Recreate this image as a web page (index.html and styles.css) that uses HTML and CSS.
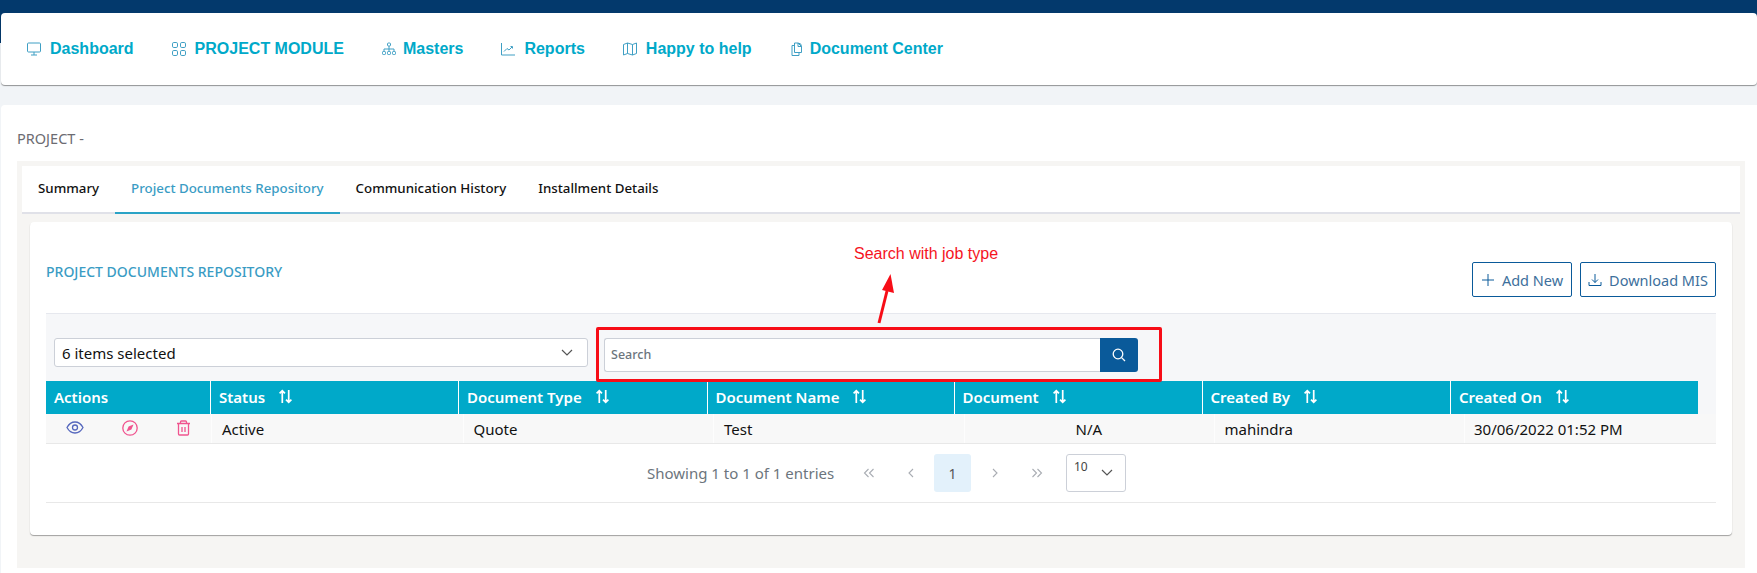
FILE: index.html
```html
<!DOCTYPE html>
<html lang="en">
<head>
    <meta charset="UTF-8">
    <meta name="viewport" content="width=device-width, initial-scale=1.0">
    <title>Project Documents Repository</title>
    <link rel="stylesheet" href="styles.css">
</head>
<body>
    <div class="top-bar"></div>
    <div class="nav-wrap">
        <nav class="main-nav">
            <a class="nav-item">
                <svg class="nav-icon" viewBox="0 0 14 14"><rect x="0.5" y="1" width="13" height="9" rx="1"/><path d="M7 10v3M4 13h6"/></svg>
                Dashboard
            </a>
            <a class="nav-item">
                <svg class="nav-icon" viewBox="0 0 14 14"><rect x="0.5" y="0.5" width="5" height="5" rx="1.3"/><rect x="8.5" y="0.5" width="5" height="5" rx="1.3"/><rect x="0.5" y="8.5" width="5" height="5" rx="1.3"/><rect x="8.5" y="8.5" width="5" height="5" rx="1.3"/></svg>
                PROJECT MODULE
            </a>
            <a class="nav-item item-masters">
                <svg class="nav-icon" viewBox="0 0 14 14"><rect x="5.5" y="1" width="3" height="3" rx="1"/><rect x="0.5" y="9.5" width="3" height="3" rx="0.8"/><rect x="5.5" y="9.5" width="3" height="3" rx="0.8"/><rect x="10.5" y="9.5" width="3" height="3" rx="0.8"/><path d="M7 4v5.5M2 9.5V7h10v2.5"/></svg>
                Masters
            </a>
            <a class="nav-item">
                <svg class="nav-icon" viewBox="0 0 14 14"><path d="M0.5 1v12h13.500"/><path d="M3 9.500l3-3 2 1.500 3-3M9.500 4.500H11.500V6.500"/></svg>
                Reports
            </a>
            <a class="nav-item">
                <svg class="nav-icon" viewBox="0 0 14 14"><path d="M0.5 2.500l4-1.500 5 1.500 4-1.500v10.500l-4 1.500-5-1.500-4 1.500zM4.500 1v10.500M9.500 2.500V13"/></svg>
                Happy to help
            </a>
            <a class="nav-item item-docs">
                <svg class="nav-icon" viewBox="0 0 14 14"><path d="M4.500 1h3.500l3.500 3.500v6h-7z"/><path d="M8 1a3.500 3.500 0 0 1 3.500 3.500H8z"/><path d="M4.500 3.500H2v10h7v-3"/></svg>
                Document Center
            </a>
        </nav>
    </div>

    <main class="page">
        <h1 class="page-title">PROJECT -</h1>
        <div class="project-area">
            <div class="tabs">
                <a class="tab">Summary</a>
                <a class="tab active">Project Documents Repository</a>
                <a class="tab">Communication History</a>
                <a class="tab">Installment Details</a>
            </div>

            <section class="card">
                <div class="card-head">
                    <h2 class="card-title">PROJECT DOCUMENTS REPOSITORY</h2>
                    <div class="card-actions">
                        <button class="btn-outline btn-add">
                            <svg class="btn-icon" viewBox="0 0 14 14"><path d="M7 1v12M1 7h12"/></svg>
                            Add New
                        </button>
                        <button class="btn-outline btn-mis">
                            <svg class="btn-icon" viewBox="0 0 14 14"><path d="M7 1v8.500M4 6.500l3 3 3-3M1 9v3.500h12V9"/></svg>
                            Download MIS
                        </button>
                    </div>
                </div>

                <div class="filter-band">
                    <div class="select-box">
                        <span>6 items selected</span>
                        <svg class="chevron" viewBox="0 0 12 7"><path d="M1 1l5 5 5-5"/></svg>
                    </div>
                    <div class="search-group">
                        <input class="search-input" type="text" placeholder="Search">
                        <button class="search-btn">
                            <svg viewBox="0 0 14 14"><circle cx="6" cy="6" r="4.800"/><path d="M9.600 9.600l3.400 3.400"/></svg>
                        </button>
                    </div>
                    <div class="note-box"></div>
                    <div class="note-text">Search with job type</div>
                    <svg class="note-arrow" viewBox="0 0 20 52"><path d="M3 50L11 18" class="note-shaft"/><path d="M14.500 1L18 20 6 17z" class="note-head"/></svg>
                </div>

                <div class="table-wrap">
                    <div class="table-head">
                        <div class="th">Actions</div>
                        <div class="th">Status <svg class="sort" viewBox="0 0 14 14"><path d="M4 13V1.500M1.500 4L4 1.500 6.500 4M10 1v11.500M7.500 10l2.500 2.500 2.500-2.500"/></svg></div>
                        <div class="th">Document Type <svg class="sort" viewBox="0 0 14 14"><path d="M4 13V1.500M1.500 4L4 1.500 6.500 4M10 1v11.500M7.500 10l2.500 2.500 2.500-2.500"/></svg></div>
                        <div class="th">Document Name <svg class="sort" viewBox="0 0 14 14"><path d="M4 13V1.500M1.500 4L4 1.500 6.500 4M10 1v11.500M7.500 10l2.500 2.500 2.500-2.500"/></svg></div>
                        <div class="th">Document <svg class="sort" viewBox="0 0 14 14"><path d="M4 13V1.500M1.500 4L4 1.500 6.500 4M10 1v11.500M7.500 10l2.500 2.500 2.500-2.500"/></svg></div>
                        <div class="th">Created By <svg class="sort" viewBox="0 0 14 14"><path d="M4 13V1.500M1.500 4L4 1.500 6.500 4M10 1v11.500M7.500 10l2.500 2.500 2.500-2.500"/></svg></div>
                        <div class="th">Created On <svg class="sort" viewBox="0 0 14 14"><path d="M4 13V1.500M1.500 4L4 1.500 6.500 4M10 1v11.500M7.500 10l2.500 2.500 2.500-2.500"/></svg></div>
                    </div>
                    <div class="table-row">
                        <div class="td row-actions">
                            <svg class="icon-eye" viewBox="0 0 18 13"><path d="M1 6.500C3 2.800 5.800 1 9 1s6 1.800 8 5.500c-2 3.700-4.800 5.500-8 5.500s-6-1.800-8-5.500z"/><circle cx="9" cy="6.500" r="2.500"/></svg>
                            <svg class="icon-compass" viewBox="0 0 16 16"><circle cx="8" cy="8" r="7.200"/><path d="M11.500 4.500L9.400 9.400 4.500 11.500 6.600 6.600z" class="fill"/></svg>
                            <svg class="icon-trash" viewBox="0 0 15 16"><path d="M1 3.500h13M2.500 3.500V14a1 1 0 0 0 1 1h8a1 1 0 0 0 1-1V3.500M4.500 3.500V2a1 1 0 0 1 1-1h4a1 1 0 0 1 1 1v1.500M6 7v5M9 7v5"/></svg>
                        </div>
                        <div class="td">Active</div>
                        <div class="td">Quote</div>
                        <div class="td">Test</div>
                        <div class="td td-center">N/A</div>
                        <div class="td">mahindra</div>
                        <div class="td">30/06/2022 01:52 PM</div>
                    </div>
                </div>

                <div class="pager">
                    <span class="pager-info">Showing 1 to 1 of 1 entries</span>
                    <a class="page-btn"><svg viewBox="0 0 12 10"><path d="M5.500 1l-4 4 4 4M10.500 1l-4 4 4 4"/></svg></a>
                    <a class="page-btn"><svg viewBox="0 0 12 10"><path d="M8 1L4 5l4 4"/></svg></a>
                    <a class="page-btn current">1</a>
                    <a class="page-btn"><svg viewBox="0 0 12 10"><path d="M4 1l4 4-4 4"/></svg></a>
                    <a class="page-btn"><svg viewBox="0 0 12 10"><path d="M1.500 1l4 4-4 4M6.500 1l4 4-4 4"/></svg></a>
                    <div class="page-size">
                        <span>10</span>
                        <svg class="chevron" viewBox="0 0 12 7"><path d="M1 1l5 5 5-5"/></svg>
                    </div>
                </div>
            </section>
        </div>
    </main>
</body>
</html>
```

FILE: styles.css
```css
* {
    box-sizing: border-box;
}
html, body {
    height: 100%;
}
body {
    margin: 0;
    height: 573px;
    overflow: hidden;
    background-color: #f1f4f7;
    font-family: "Noto Sans", Arial, sans-serif;
    font-size: 15px;
    color: #111;
}
svg {
    fill: none;
    stroke: currentColor;
    flex: none;
}

/* top navigation */
.top-bar {
    height: 13px;
    background: #03396c;
}
.nav-wrap {
    padding-left: 1px;
    background: linear-gradient(#03396c 30px, transparent 30px);
}
.main-nav {
    display: flex;
    align-items: center;
    height: 72px;
    padding: 0 0 0 26px;
    background: #fff;
    border-radius: 4px;
    box-shadow: 0 1px 1px rgba(0, 0, 0, 0.4);
}
.nav-item {
    display: flex;
    align-items: center;
    gap: 9px;
    margin-right: 38px;
    font-family: "Liberation Sans", Arial, sans-serif;
    font-size: 16px;
    font-weight: bold;
    color: #00a9c9;
}
.item-masters {
    gap: 7px;
}
.item-docs {
    gap: 6px;
}
.nav-icon {
    width: 14px;
    height: 14px;
    color: #3f9fc4;
    stroke-width: 1;
}

/* page */
.page {
    height: 468px;
    margin: 20px 0 0 1px;
    padding: 0 12.500px 5px 16px;
    background: #fff;
    border-radius: 4px 0 0 0;
}
.page-title {
    margin: 0;
    height: 56px;
    padding-top: 24px;
    font-size: 14.500px;
    line-height: 18px;
    font-weight: 400;
    color: #6c6c72;
}
.project-area {
    height: 407px;
    padding: 5px 4.500px 0 5px;
    background: #f6f5f3;
}

/* tabs */
.tabs {
    display: flex;
    height: 48px;
    background: #fff;
    border-bottom: 2px solid #e0e1e8;
}
.tab {
    height: 48px;
    padding: 0 16px;
    line-height: 45px;
    font-size: 13.300px;
    font-weight: 500;
    color: #111;
}
.tab.active {
    color: #3a9cc4;
    border-bottom: 2px solid #2aa3c6;
}

/* card */
.card {
    height: 313px;
    margin: 8px 8px 0 8px;
    padding: 0 16px;
    background: #fff;
    border-radius: 4px;
    box-shadow: 0 1px 1px rgba(0, 0, 0, 0.35);
}
.card-head {
    display: flex;
    justify-content: space-between;
    height: 91px;
    padding-top: 40px;
}
.card-title {
    margin: 0;
    font-size: 14px;
    line-height: 20px;
    font-weight: 500;
    color: #3a9cc4;
}
.card-actions {
    display: flex;
    gap: 8px;
}
.btn-outline {
    display: flex;
    align-items: center;
    justify-content: center;
    gap: 7px;
    height: 35px;
    padding: 0;
    background: #fff;
    border: 1px solid #0a5a9a;
    border-radius: 2px;
    font-family: inherit;
    font-size: 14.500px;
    color: #3d6f9c;
}
.btn-add {
    width: 100px;
}
.btn-mis {
    width: 136px;
}
.btn-icon {
    width: 14px;
    height: 14px;
    color: #0a5a9a;
    stroke-width: 1;
}

/* filter row, with the red note drawn over it */
.filter-band {
    position: relative;
    display: flex;
    align-items: flex-start;
    gap: 16px;
    height: 68px;
    padding: 24px 0 0 8px;
    background: #f6f7f9;
    border-top: 1px solid #e6e8ee;
}
.select-box {
    display: flex;
    align-items: center;
    justify-content: space-between;
    width: 534px;
    height: 29px;
    padding: 0 14px 0 7px;
    background: #fff;
    border: 1px solid #ccd0d8;
    border-radius: 3px;
}
.chevron {
    width: 12px;
    height: 7px;
    color: #555;
    stroke-width: 1.200;
}
.search-group {
    display: flex;
    width: 534px;
    height: 34px;
}
.search-input {
    flex: 1;
    min-width: 0;
    padding: 0 6px 2px;
    background: #fff;
    border: 1px solid #ccd0d8;
    border-right: 0;
    border-radius: 3px 0 0 3px;
    font-family: inherit;
    font-size: 12.500px;
    font-weight: 500;
}
.search-input::placeholder {
    color: #6c757d;
    opacity: 1;
}
.search-btn {
    display: flex;
    align-items: center;
    justify-content: center;
    width: 38px;
    padding: 0;
    background: #0a5a9a;
    border: 0;
    border-radius: 0 3px 3px 0;
    color: #fff;
}
.search-btn svg {
    width: 14px;
    height: 14px;
    stroke-width: 1.300;
}
.note-box {
    position: absolute;
    left: 550px;
    top: 13px;
    width: 566px;
    height: 55px;
    border: 3px solid #f70d17;
    border-radius: 2px;
}
.note-text {
    position: absolute;
    left: 808px;
    top: -69px;
    font-family: "Liberation Sans", Arial, sans-serif;
    font-size: 16px;
    line-height: 18px;
    white-space: nowrap;
    color: #f5141e;
}
.note-arrow {
    position: absolute;
    left: 830px;
    top: -41px;
    width: 20px;
    height: 52px;
}
.note-shaft {
    stroke: #f70d17;
    stroke-width: 3;
}
.note-head {
    fill: #f70d17;
    stroke: none;
}

/* table */
.table-wrap {
    background: #f6f7f9;
}
.table-head,
.table-row {
    display: grid;
}
.table-head {
    grid-template-columns: 165px 248px 248.500px 247px 248px 248.500px 247.500px;
    width: 1652px;
    height: 33px;
    background: #00a9c9;
}
.th {
    display: flex;
    align-items: center;
    gap: 13px;
    padding: 0 0 2px 8px;
    border-right: 1px solid #fff;
    font-size: 15px;
    font-weight: 600;
    color: #fff;
}
.th:last-child {
    border-right: 0;
}
.sort {
    width: 15px;
    height: 15px;
    stroke-width: 1.600;
}
.table-row {
    grid-template-columns: 166px 251.500px 250.500px 250.500px 250px 250.500px 251px;
    height: 30px;
    background: #f8f8f8;
    border-bottom: 1px solid #e8e8e8;
}
.td {
    display: flex;
    align-items: center;
    padding-left: 10px;
    border-right: 1px solid #fdfdfd;
    color: #111;
}
.td-center {
    padding-left: 111px;
}
.td:last-child {
    padding-left: 9px;
    border-right: 0;
}
.row-actions {
    gap: 38px;
    padding: 0 0 2px 20px;
}
.row-actions svg {
    stroke-width: 1.300;
}
.icon-eye {
    width: 18px;
    height: 13px;
    color: #5567bd;
}
.icon-compass {
    width: 16px;
    height: 16px;
    color: #f0548f;
}
.icon-compass .fill {
    fill: #f0548f;
    stroke: none;
}
.icon-trash {
    width: 15px;
    height: 16px;
    color: #f0548f;
}

/* pagination */
.pager {
    display: flex;
    align-items: flex-start;
    gap: 5px;
    height: 59px;
    padding: 10px 0 0 601px;
    border-bottom: 1px solid #e8e8e8;
}
.pager-info {
    width: 198px;
    line-height: 38px;
    white-space: nowrap;
    color: #6c757d;
}
.page-btn {
    display: flex;
    align-items: center;
    justify-content: center;
    width: 37px;
    height: 38px;
    border-radius: 3px;
    font-size: 14px;
    color: #a9adb3;
}
.page-btn svg {
    width: 12px;
    height: 10px;
    stroke-width: 1.100;
}
.page-btn.current {
    background: #e3f1fb;
    color: #555;
}
.page-size {
    display: flex;
    justify-content: space-between;
    width: 60px;
    height: 38px;
    margin-left: 6px;
    padding: 4px 12px 0 7px;
    background: #fff;
    border: 1px solid #ccd0d8;
    border-radius: 3px;
    font-size: 12px;
    line-height: 16px;
    color: #444;
}
.page-size .chevron {
    margin-top: 10px;
}
```
